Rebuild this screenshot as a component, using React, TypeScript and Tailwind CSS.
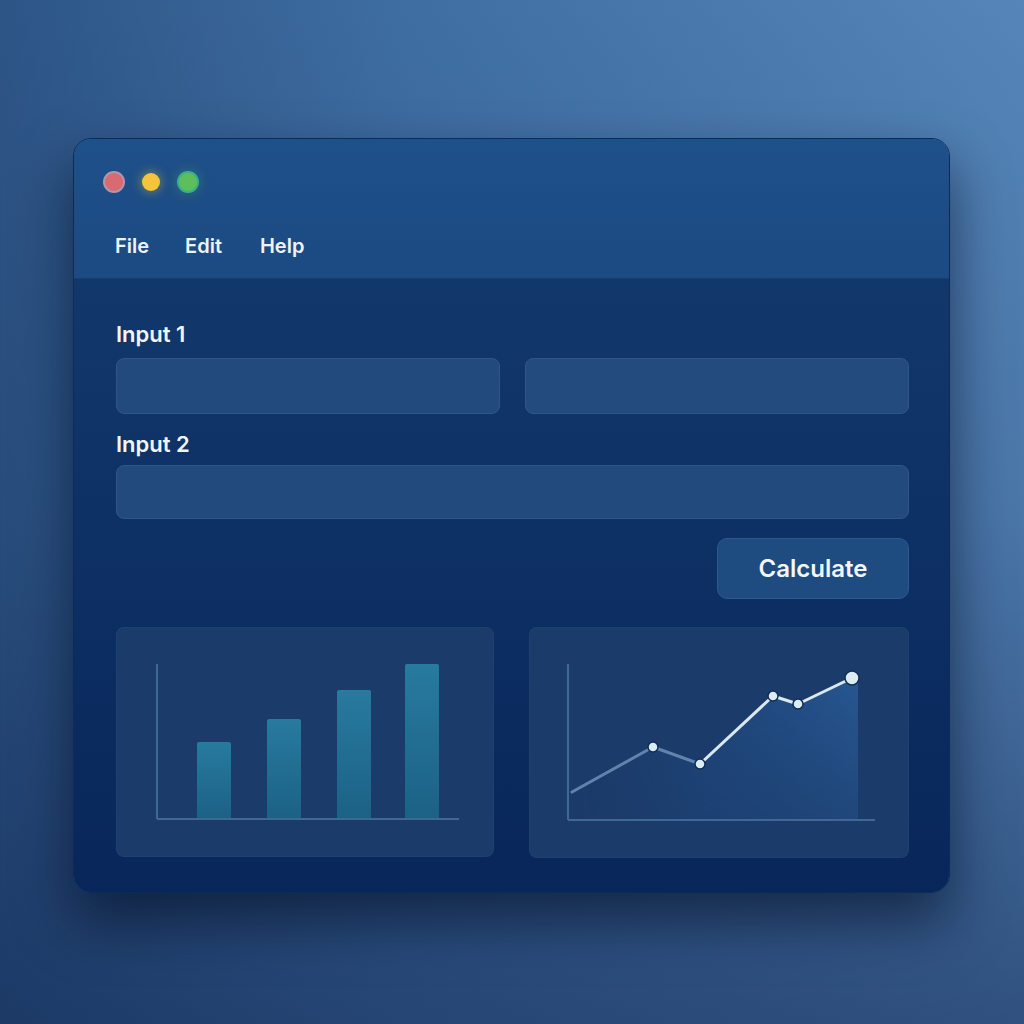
import React from 'react'

const font = { fontFamily: 'Inter, "Noto Sans", "Liberation Sans", sans-serif' }

function TrafficLights() {
  return (
    <div className="flex items-center gap-[19px]">
      <span className="w-[18px] h-[18px] rounded-full bg-[#d86a72] ring-2 ring-[#f0b5b8]/70" />
      <span className="w-[18px] h-[18px] rounded-full bg-[#f2c53a] shadow-[0_0_10px_2px_rgba(242,197,58,0.35)]" />
      <span className="w-[18px] h-[18px] rounded-full bg-[#5cbf5a] ring-2 ring-[#3fd39a]/70 shadow-[0_0_12px_3px_rgba(92,191,90,0.3)]" />
    </div>
  )
}

function BarChart() {
  const bars = [
    { x: 80, top: 114 },
    { x: 150, top: 91 },
    { x: 220, top: 62 },
    { x: 288, top: 36 },
  ]
  return (
    <svg width="378" height="230" viewBox="0 0 378 230">
      <defs>
        <linearGradient id="barFill" x1="0" y1="0" x2="0" y2="1">
          <stop offset="0" stopColor="#287a9f" />
          <stop offset="1" stopColor="#1c6186" />
        </linearGradient>
      </defs>
      {bars.map((b) => (
        <rect key={b.x} x={b.x} y={b.top} width="34" height={191 - b.top} rx="2" fill="url(#barFill)" />
      ))}
      <line x1="40" y1="36" x2="40" y2="191" stroke="#3e6896" strokeWidth="2" />
      <line x1="40" y1="191" x2="342" y2="191" stroke="#3e6896" strokeWidth="2" />
    </svg>
  )
}

function LineChart() {
  const pts: [number, number][] = [
    [42, 164],
    [123, 119],
    [170, 136],
    [243, 68],
    [268, 76],
    [322, 50],
  ]
  const area = `M42,164 L123,119 L170,136 L243,68 L268,76 L322,50 L328,50 L328,192 L42,192 Z`
  return (
    <svg width="380" height="231" viewBox="0 0 380 231">
      <defs>
        <linearGradient id="areaH" x1="0" y1="0" x2="1" y2="0">
          <stop offset="0" stopColor="#1d4275" stopOpacity="0" />
          <stop offset="0.45" stopColor="#22518a" stopOpacity="0.6" />
          <stop offset="1" stopColor="#2a5c98" stopOpacity="1" />
        </linearGradient>
        <linearGradient id="areaV" x1="0" y1="0" x2="0" y2="1">
          <stop offset="0" stopColor="#ffffff" stopOpacity="1" />
          <stop offset="1" stopColor="#ffffff" stopOpacity="0.25" />
        </linearGradient>
        <mask id="fade">
          <rect x="0" y="0" width="380" height="231" fill="url(#areaV)" />
        </mask>
      </defs>
      <path d={area} fill="url(#areaH)" mask="url(#fade)" />
      <line x1="38" y1="36" x2="38" y2="192" stroke="#3e6896" strokeWidth="2" />
      <line x1="38" y1="192" x2="345" y2="192" stroke="#3e6896" strokeWidth="2" />
      <polyline points="42,164 123,119 170,136" fill="none" stroke="#7fa2c8" strokeOpacity="0.7" strokeWidth="3" strokeLinejoin="round" strokeLinecap="round" />
      <polyline points="170,136 243,68 268,76 322,50" fill="none" stroke="#dce8f0" strokeWidth="3" strokeLinejoin="round" strokeLinecap="round" />
      {pts.slice(1).map(([x, y], i) => (
        <circle key={i} cx={x} cy={y} r={i === pts.length - 2 ? 7 : 5} fill="#dcecf3" stroke="#0f2d57" strokeWidth="1.5" />
      ))}
    </svg>
  )
}

export default function App() {
  return (
    <div
      className="w-[1024px] h-[1024px] overflow-hidden pt-[138px] pl-[73px] bg-[linear-gradient(180deg,rgba(12,30,70,0)_0%,rgba(12,30,70,0.15)_50%,rgba(12,30,70,0.5)_100%),linear-gradient(90deg,#2d5586_0%,#3f6ea3_40%,#5585b9_100%)]"
      style={font}
    >
      <div className="w-[877px] h-[755px] rounded-[18px] overflow-hidden flex flex-col border border-[#0d2b57] shadow-[0_28px_55px_rgba(4,14,35,0.6)]">
        <div className="h-[140px] shrink-0 flex flex-col bg-[linear-gradient(180deg,#1e5089_0%,#1c4a82_100%)] border-b border-[#183f72]">
          <div className="pt-[34px] pl-[31px]">
            <TrafficLights />
          </div>
          <div className="flex gap-[36px] pl-[41px] pt-[40px] text-[20px] font-semibold text-[#eef3fa]">
            <span>File</span>
            <span>Edit</span>
            <span className="ml-[2px]">Help</span>
          </div>
        </div>

        <div className="flex-1 flex flex-col pl-[42px] pr-[40px] pt-[41px] bg-[linear-gradient(180deg,#12386b_0%,#0d2f63_50%,#082659_100%)]">
          <div className="text-[22px] font-semibold leading-[28px] text-[#f1f5fb]">Input 1</div>
          <div className="grid grid-cols-2 gap-[25px] mt-[10px]">
            <div className="h-[56px] rounded-[8px] bg-[#234a7c] border border-[#2d5689]" />
            <div className="h-[56px] rounded-[8px] bg-[#244b7d] border border-[#2d5689]" />
          </div>
          <div className="text-[22px] font-semibold leading-[28px] text-[#f1f5fb] mt-[16px]">Input 2</div>
          <div className="h-[54px] mt-[7px] rounded-[8px] bg-[#234a7c] border border-[#2d5689]" />
          <div className="flex justify-end mt-[19px]">
            <button className="w-[192px] h-[61px] rounded-[10px] bg-[#1e4b80] border border-[#2a5a90] text-[24px] font-semibold text-[#f4f7fb]">
              Calculate
            </button>
          </div>
          <div className="flex gap-[35px] mt-[28px]">
            <div className="w-[378px] h-[230px] rounded-[8px] bg-[#1b3b6a] border border-[#21467a]/60">
              <BarChart />
            </div>
            <div className="w-[380px] h-[231px] rounded-[8px] bg-[#1b3b6a] border border-[#21467a]/60">
              <LineChart />
            </div>
          </div>
        </div>
      </div>
    </div>
  )
}
